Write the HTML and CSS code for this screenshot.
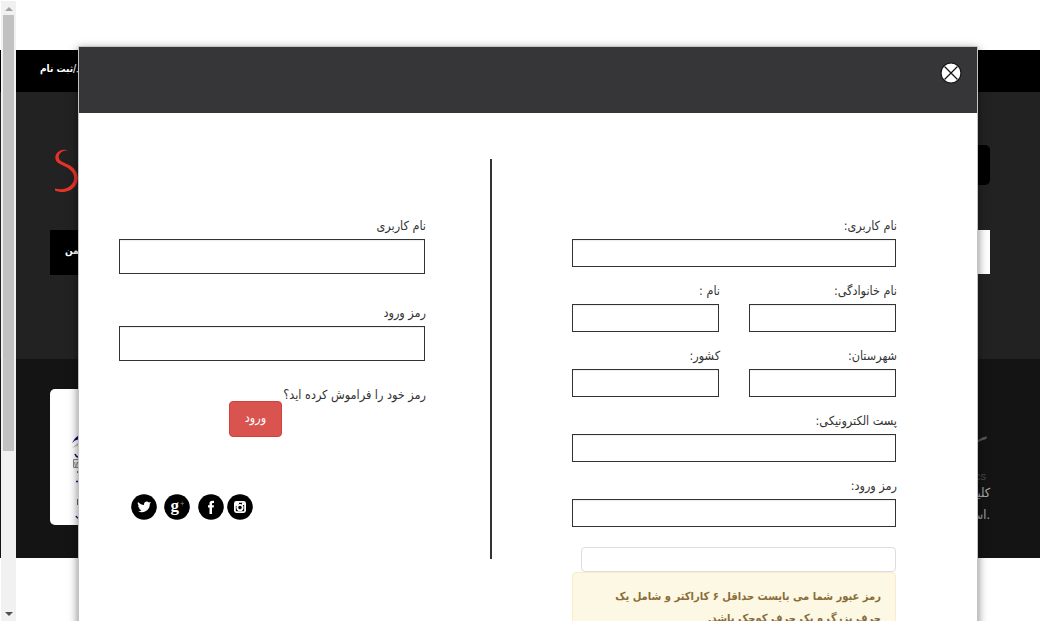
FILE: index.html
```html
<!DOCTYPE html>
<html lang="fa">
<head>
<meta charset="utf-8">
<title>ورود / ثبت نام</title>
<link rel="stylesheet" href="styles.css">
</head>
<body>
<div class="viewport">
  <div class="page">
    <div class="topbar"><span dir="rtl">ورود/ثبت نام</span></div>
    <header class="header">
      <div class="brand-row">
        <svg class="logo" width="60" height="46" viewBox="0 0 60 46"><path d="M18 3.200C13 1.500 5.500 4 5.300 10.500C5.300 16.500 12 17.500 17 20.500C26 26 26 34 20 39C15 43 10 42.500 5 41.500V43.500C12 46.500 21 45 25.500 38.500C30 31 27.500 23 20 18.500C15 15.500 8.500 15 8.700 9.500C9 5.500 13 3.500 18 3.200Z" fill="#e63329"/></svg>
        <div class="search"></div>
      </div>
      <div class="nav"><span class="nav-item" dir="rtl">انجمن</span><div class="nav-field"></div></div>
    </header>
    <footer class="footer">
      <div class="badge-card">
        <svg width="40" height="136" viewBox="0 0 40 136"><path d="M22 54Q25 48 32 44V52Q27 48 22 54Z" fill="#0a0a70"/><path d="M22 59L32 51V55Z" fill="#c9b8b4"/><path d="M25 65Q27 70 32 67M26 92.500H32M26 127Q28 131 32 128" stroke="#14147c" stroke-width="1.600" fill="none"/><path d="M23.500 70.500H34V78.500H23.500Z" stroke="#888" fill="#f4f4f4"/><text x="24" y="78" class="badge-text">w</text><path d="M27 83H30" stroke="#a4624a" stroke-width="2"/><path d="M28 110V116" stroke="#333355" stroke-width="1.500"/></svg>
      </div>
      <div class="about">
        <svg width="36" height="14" viewBox="0 0 36 14"><path d="M20 12Q25 4 32.500 3.500Q34 5 31 6.500Q25 7.500 22 11Z" fill="#555759"/></svg>
        <span class="stats">Analytics</span>
        <p dir="rtl">کلیه</p>
        <p dir="rtl">.است</p>
      </div>
    </footer>
  </div>
  <div class="scrollbar"><i class="arrow up"></i><div class="thumb"></div><i class="arrow down"></i></div>
  <div class="modal">
    <div class="modal-head">
      <svg width="22" height="22" viewBox="0 0 22 22"><circle cx="11" cy="11" r="10" fill="#fff" stroke="#161616" stroke-width="1.200"/><path d="M4.500 4.500L17.500 17.500M17.500 4.500L4.500 17.500" stroke="#161616" stroke-width="1.300"/></svg>
    </div>
    <div class="modal-body">
      <form class="login" dir="rtl">
        <label>نام کاربری</label><input class="tall" type="text">
        <label class="second">رمز ورود</label><input class="tall" type="password">
        <div class="actions"><a class="forgot">رمز خود را فراموش کرده اید؟</a><button type="button">ورود</button></div>
        <div class="social" dir="ltr">
          <svg viewBox="0 0 26 26"><circle cx="13" cy="13" r="12.800"/><path class="w" d="M7 8C9 10 11 11 13 11C12.500 8 16 6.500 18 8.500L20 8L18.800 10C19 16 13 20 7 17.500Q9 17.500 10.500 16.300Q8.500 16 8 14.300H9Q7 13.500 7 11.500L8 11.800Q6 10 7 8Z"/></svg>
          <svg viewBox="0 0 26 26"><circle cx="13" cy="13" r="12.800"/><text x="6.500" y="16.500" class="google">g</text><path d="M16.500 9.500H20M18.300 7.500V11.500" stroke="#777" stroke-width=".7"/></svg>
          <svg viewBox="0 0 26 26"><circle cx="13" cy="13" r="12.800"/><path class="w" d="M11.500 20V13.500H10V11.200H11.500V9.500Q11.500 6.700 14.500 6.700H16V9H14.800Q14 9 14 10V11.200H16L15.700 13.500H14V20Z"/></svg>
          <svg viewBox="0 0 26 26"><circle cx="13" cy="13" r="12.800"/><rect x="7.900" y="7.900" width="10.200" height="10.200" rx="1.500" fill="none" stroke="#fff" stroke-width="1.800"/><circle cx="13" cy="13.500" r="2.700" fill="none" stroke="#fff" stroke-width="1.800"/><path class="w" d="M8 8H12V10L9.500 12H8ZM15 8.500H17.500V11H15Z"/></svg>
        </div>
      </form>
      <div class="divider"></div>
      <form class="register" dir="rtl">
        <div class="field"><label>نام کاربری:</label><input type="text"></div>
        <div class="pair">
          <div class="field"><label>نام خانوادگی:</label><input type="text"></div>
          <div class="field"><label>نام :</label><input type="text"></div>
        </div>
        <div class="pair">
          <div class="field"><label>شهرستان:</label><input type="text"></div>
          <div class="field"><label>کشور:</label><input type="text"></div>
        </div>
        <div class="field"><label>پست الکترونیکی:</label><input type="text"></div>
        <div class="field"><label>رمز ورود:</label><input type="password"></div>
        <div class="meter"></div>
        <div class="alert"><span>رمز عبور شما می بایست حداقل ۶ کاراکتر و شامل یک</span><br><span>حرف بزرگ و یک حرف کوچک باشد.</span></div>
      </form>
    </div>
  </div>
</div>
</body>
</html>
```
FILE: styles.css
```css
* { box-sizing: border-box; }
body { margin: 0; background: #fff; font: 12.5px/20px "DejaVu Sans Condensed", "DejaVu Sans", sans-serif; color: #333; }
.viewport { position: relative; height: 621px; overflow: hidden; }
.page { padding-top: 50px; }
.topbar { height: 42px; background: #000; color: #fff; padding: 9px 40px; font-size: 10px; font-weight: bold; }
.header { height: 267px; background: #222; padding: 53px 50px 0; }
.brand-row { display: flex; justify-content: space-between; height: 85px; }
.logo { margin-top: 2px; }
.search { width: 200px; height: 40px; background: #000; border-radius: 5px; }
.nav { display: flex; justify-content: space-between; height: 45px; }
.nav-item { width: 740px; padding: 11px 15px; background: #000; color: #fff; font-size: 10px; font-weight: bold; text-align: left; }
.nav-field { width: 200px; height: 44px; background: #fff; }
.footer { height: 199px; background: #141414; padding: 30px 50px 0; display: flex; justify-content: space-between; }
.badge-card { width: 150px; height: 136px; background: #fff; border-radius: 5px; }
.badge-text { font: 9px "Liberation Sans", sans-serif; fill: #777; }
.about { display: flex; flex-direction: column; align-items: flex-end; padding-top: 44px; color: #aaa; }
.about p { margin: 0; line-height: 22px; }
.stats { color: #4b4b4b; font: 11px/14px "Liberation Sans", sans-serif; margin: 22px 4px 0 0; }
.stats + p { margin-top: -1px; }

.scrollbar { position: absolute; left: 1px; top: 1px; width: 15px; height: 620px; background: #f1f1f1; display: flex; flex-direction: column; align-items: center; }
.thumb { width: 11px; height: 436px; margin: 4px 0 0; background: #c1c1c1; }
.arrow { border: 4px solid transparent; border-top-width: 0; border-bottom-width: 0; }
.up { border-bottom: 4px solid #a3a3a3; margin-top: 6px; }
.down { border-top: 4px solid #505050; margin: auto 0 5px; }

.modal { position: absolute; left: 78px; top: 46px; width: 900px; height: 700px; background: #fff; border: 1px solid #c4c4c4; box-shadow: 0 3px 9px rgba(0, 0, 0, .5); }
.modal-head { height: 66px; background: #363638; display: flex; justify-content: flex-end; padding: 15px 15px; }
.modal-body { display: flex; padding: 46px 81px 0 40px; }
.login { width: 306px; padding-top: 57px; }
.divider { width: 2px; height: 400px; margin: 0 80px 0 65px; background: #333; }
.register { width: 324px; padding-top: 57px; }
label { display: block; height: 23px; line-height: 20px; white-space: nowrap; margin-right: -1px; }
input { display: block; width: 100%; height: 28px; border: 1px solid #333; background: #fff; box-shadow: inset 0 1px 1px rgba(0, 0, 0, .075); padding: 0 8px; font: inherit; outline: 0; }
.tall { height: 35px; }
.second { margin-top: 29px; }
.actions { display: flex; margin: 24px -1px 0 0; align-items: flex-start; white-space: nowrap; }
.forgot { width: 144px; flex: none; }
button { width: 53px; height: 36px; margin: 16px 0 0; padding: 0 0 2px; flex: none; border: 1px solid #d43f3a; border-radius: 4px; background: #d9534f; color: #fff; font: inherit; }
.social { display: flex; margin: 57px 0 0 12px; }
.social svg { width: 26px; height: 26px; margin-right: 7px; }
.social svg:nth-child(2) { margin-right: 8px; }
.social svg:nth-child(3) { margin-right: 3px; }
.google { font: bold 17px "Liberation Serif", serif; fill: #fff; }
.w { fill: #fff; }
.field { flex: 1; margin-bottom: 14px; min-width: 0; }
.pair { display: flex; gap: 30px; }
.meter { width: 315px; height: 25px; margin-top: 20px; border: 1px solid #ddd; border-radius: 4px; }
.alert { height: 100px; padding: 13px 14px; border: 1px solid #faebcc; border-radius: 4px; background: #fcf8e3; color: #8a6d3b; font-size: 11.1px; font-weight: bold; line-height: 22px; white-space: nowrap; }
```
